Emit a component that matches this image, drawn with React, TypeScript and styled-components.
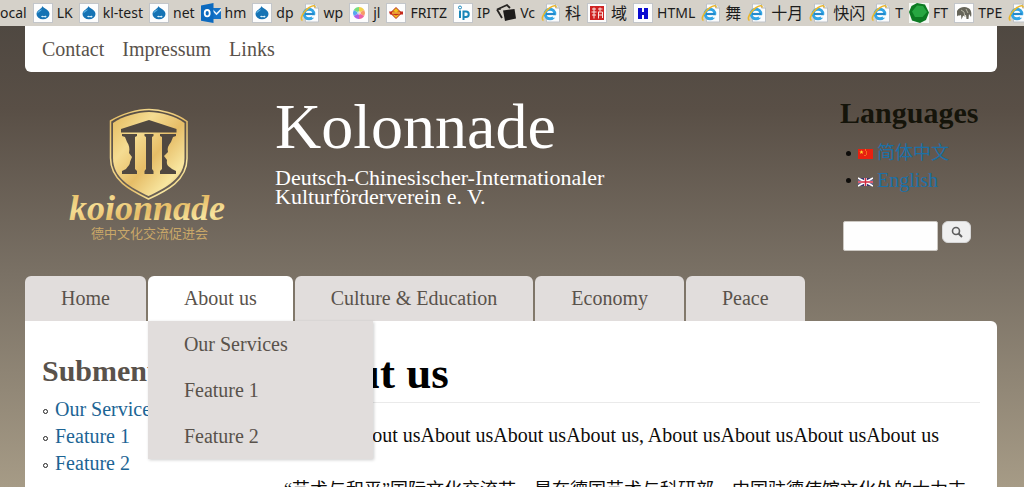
import React from 'react';
import styled, { createGlobalStyle } from 'styled-components';

const serif = `Georgia, 'Liberation Serif', 'Noto Sans CJK SC', serif`;
const sans = `'Noto Sans', 'Noto Sans CJK SC', sans-serif`;

const GlobalStyle = createGlobalStyle`
  * { box-sizing: border-box; }
  html, body { margin: 0; height: 100%; overflow: hidden; }
  body { font-family: ${serif}; font-size: 20px; color: #0e0c0a; background: #a59a86; }
  a { color: inherit; text-decoration: none; }
  ul { list-style: none; margin: 0; padding: 0; }
  h1, h2, p { margin: 0; }
`;

/* ---------- bookmarks bar ---------- */

const BookmarkBar = styled.nav`
  display: flex;
  align-items: center;
  gap: 6px;
  height: 26px;
  overflow: hidden;
  background: #d5d1c9;
  font-family: ${sans};
  line-height: 24px;
  color: #1c1c1c;
`;

const Bookmark = styled.a<{ $cjk?: boolean }>`
  display: flex;
  flex: none;
  align-items: center;
  gap: 4px;
  height: 24px;
  font-size: ${(p) => (p.$cjk ? 16 : 14)}px;
  white-space: nowrap;

  svg { display: block; flex: none; }
`;

type IconKind = 'drupal' | 'outlook' | 'ie' | 'joomla' | 'fritz' | 'ip' | 'cards' | 'seal' | 'h' | 'gem' | 'tree';

const Tile = () => <rect x="0.5" y="0.5" width="19" height="19" fill="#fdfdfd" stroke="#c3c6ca" />;

function BookmarkIcon({ kind }: { kind: IconKind }) {
  return (
    <svg width="20" height="20" viewBox="0 0 20 20" aria-hidden="true">
      {kind === 'drupal' && (
        <>
          <Tile />
          <path d="M9.500 3C10.500 5.500 16.500 6.500 16.500 11a6.500 5.300 0 0 1-13 0C3.500 7 9 6 9.500 3Z" fill="#1673b4" />
          <path d="M4.500 9.500c1-2 3-2.600 4.600-3.200C8.500 8 6.500 8.500 4.500 10.500Z" fill="#5cb3e4" />
          <path d="M8 13.500c1-1 2-.8 2.800-.2 1-.8 2.700-.8 2.700.3 0 1-1.500 1-2.700.3-1 .6-2.300.6-2.800-.4Z" fill="#d9f0fb" />
        </>
      )}
      {kind === 'outlook' && (
        <>
          <path d="M11 5h9.500v11H11Z" fill="#1673c8" />
          <path d="m11.500 7 4 4 5-5" fill="none" stroke="#eaf4fd" strokeWidth="1.600" />
          <path d="M0 2.500 12.500 0v20L0 17.800Z" fill="#0c6abf" />
          <ellipse cx="6.200" cy="10.200" rx="2.500" ry="3.200" fill="none" stroke="#fff" strokeWidth="1.800" />
        </>
      )}
      {kind === 'ie' && (
        <>
          <path d="M5.500 1h9l4 4v14h-13Z" fill="#fbfcfd" stroke="#bfc3c8" />
          <path d="M14.500 1v4h4" fill="#e5e8ec" stroke="#b4b8bd" />
          <circle cx="9" cy="11" r="4.800" fill="#fff" stroke="#32a5e4" strokeWidth="3" />
          <path d="M5 11h9" stroke="#2389cc" strokeWidth="2.200" />
          <path d="M11 12.300h5v2.400h-4Z" fill="#fbfcfd" />
          <path d="M2.500 17.500C-1 16 4 8 8.500 5c4-2.800 7-3 6.500-.5" fill="none" stroke="#eab72e" strokeWidth="1.600" />
        </>
      )}
      {kind === 'joomla' && (
        <>
          <Tile />
          <path d="M10 10V4a6 6 0 0 1 5.200 3Z" fill="#f2d04a" />
          <path d="M10 10 15.200 7a6 6 0 0 1 0 6Z" fill="#f79a66" />
          <path d="m10 10 5.200 3A6 6 0 0 1 10 16Z" fill="#ef62a0" />
          <path d="M10 10v6a6 6 0 0 1-5.200-3Z" fill="#b05fe6" />
          <path d="m10 10-5.200 3a6 6 0 0 1 0-6Z" fill="#56a7f0" />
          <path d="M10 10 4.800 7A6 6 0 0 1 10 4Z" fill="#79dc7d" />
          <circle cx="10" cy="10" r="2" fill="#fff" opacity="0.5" />
        </>
      )}
      {kind === 'fritz' && (
        <>
          <Tile />
          <path d="m10 4.500 5.500 5.500-5.500 5.500L4.500 10Z" fill="#f3c318" stroke="#b3221b" />
          <path d="M3 8.500h5l2 1 2-1h5v3h-4l-3 1-3-1H4Z" fill="#c62a1c" />
          <path d="M6 10h8" stroke="#ffe04a" strokeWidth="1.200" />
        </>
      )}
      {kind === 'ip' && (
        <>
          <Tile />
          <circle cx="7" cy="4.500" r="1.500" fill="none" stroke="#1a86b8" />
          <path d="M7 7.500v7.500M10.500 17V8.500h2.500a2.500 2.500 0 0 1 0 5.500h-2" fill="none" stroke="#1a86b8" strokeWidth="2" />
        </>
      )}
      {kind === 'cards' && (
        <>
          <path d="M1 6.500 11 2l3 3M1 6.500l5 8.500" fill="none" stroke="#262422" strokeWidth="1.800" />
          <path d="m7 7.500 11.500-1.500 1.500 9.500-11 2.500Z" fill="#1d1b1a" />
          <path d="m1 6.500 3-1.500 1 2Z" fill="#262422" />
        </>
      )}
      {kind === 'seal' && (
        <>
          <Tile />
          <rect x="3" y="3" width="14" height="14" fill="#cf2222" />
          <path d="M5 6h4M7 4.500v11M4.500 9h5M5 12h4M11 6h4.500M13 4.500v4M11 9h4.500v6M11.500 9v6.500M11 12h4" stroke="#fbe3e0" fill="none" />
        </>
      )}
      {kind === 'h' && (
        <>
          <Tile />
          <path d="M5 5h4v4h2V5h4v11h-4v-4H9v4H5Z" fill="#0a0ad0" />
        </>
      )}
      {kind === 'gem' && (
        <>
          <rect width="20" height="20" fill="#f5f8f4" />
          <path d="m8 0 8 1.500 4 8-3 7.500-6 3-8-2.500L0 9l2.500-6Z" fill="#0c7a22" />
          <path d="m8 2.500 6 .5 4 6-4.500 5H6L3 8.500Z" fill="#27a641" />
        </>
      )}
      {kind === 'tree' && (
        <>
          <Tile />
          <path d="M3 8c2-4 8-5 11-3 3 1 4 5 3 9l-2-3-.5 5h-2L12 12l-3 1-1.500 3.500L7 12c-2 1-3.500 0-4 1.500Z" fill="#66655a" />
          <path d="m7 7 3 2 1 5M12 6l2 4" stroke="#b7b6a5" fill="none" />
        </>
      )}
    </svg>
  );
}

const bookmarks: { icon: IconKind; label: string; cjk?: boolean }[] = [
  { icon: 'drupal', label: 'LK' },
  { icon: 'drupal', label: 'kl-test' },
  { icon: 'drupal', label: 'net' },
  { icon: 'outlook', label: 'hm' },
  { icon: 'drupal', label: 'dp' },
  { icon: 'ie', label: 'wp' },
  { icon: 'joomla', label: 'jl' },
  { icon: 'fritz', label: 'FRITZ' },
  { icon: 'ip', label: 'IP' },
  { icon: 'cards', label: 'Vc' },
  { icon: 'ie', label: '科', cjk: true },
  { icon: 'seal', label: '域', cjk: true },
  { icon: 'h', label: 'HTML' },
  { icon: 'ie', label: '舞', cjk: true },
  { icon: 'ie', label: '十月', cjk: true },
  { icon: 'ie', label: '快闪', cjk: true },
  { icon: 'ie', label: 'T' },
  { icon: 'gem', label: 'FT' },
  { icon: 'tree', label: 'TPE' },
  { icon: 'ie', label: '' },
];

/* ---------- page ---------- */

const Page = styled.div`
  display: flex;
  flex-direction: column;
  height: calc(100vh - 26px);
  padding: 0 27px 0 25px;
  background: linear-gradient(#4f4841, #594f46 18%, #7a7165 54%, #a69b86);
`;

const TopMenu = styled.nav`
  display: flex;
  align-items: center;
  gap: 18px;
  flex: none;
  height: 46px;
  padding: 0 17px;
  background: #fff;
  border-radius: 0 0 6px 6px;
  color: #59524b;
`;

const Header = styled.header`
  display: grid;
  grid-template-columns: 250px 1fr 157px;
  flex: none;
  min-height: 204px;
`;

const LogoLink = styled.a`
  padding: 34px 0 0 37px;

  svg { display: block; }
`;

const Branding = styled.div`
  padding-top: 23px;
  color: #fff;
`;

const SiteName = styled.div`
  font-size: 64px;
  line-height: 64px;
`;

const Slogan = styled.p`
  max-width: 350px;
  margin-top: 9px;
  font-size: 22px;
  line-height: 19px;
`;

const HeaderSide = styled.div`
  padding-top: 24px;
`;

const BlockTitle = styled.h2<{ $color: string }>`
  font-size: 30px;
  line-height: 34px;
  color: ${(p) => p.$color};
`;

const LanguageList = styled.ul`
  margin-top: 10px;
  padding-left: 6px;
`;

const LanguageItem = styled.li`
  display: flex;
  align-items: center;
  height: 27px;

  &::before {
    content: '';
    width: 5px;
    height: 5px;
    margin-right: 7px;
    border-radius: 50%;
    background: #0e0c0a;
  }
`;

const LanguageLink = styled.a<{ $cjk?: boolean }>`
  display: flex;
  align-items: center;
  gap: 4px;
  font-size: ${(p) => (p.$cjk ? 18 : 20)}px;
  line-height: 27px;
  color: #1c70a6;
`;

const SearchForm = styled.form`
  display: flex;
  align-items: flex-start;
  gap: 4px;
  margin-top: 27px;
  padding-left: 3px;
`;

const SearchInput = styled.input`
  width: 95px;
  height: 30px;
  padding: 4px;
  border: 1px solid #ccc8c2;
  border-radius: 2px;
  background: #fefefe;
  font: 16px ${serif};
`;

const SearchButton = styled.button`
  display: flex;
  align-items: center;
  justify-content: center;
  width: 29px;
  height: 22px;
  padding: 0;
  border: 1px solid #d5d5d5;
  border-radius: 6px;
  background: #efefef;
`;

const Tabs = styled.ul`
  display: flex;
  flex: none;
  gap: 2px;
`;

const Tab = styled.li`
  position: relative;
`;

const TabLink = styled.a<{ $active?: boolean }>`
  display: block;
  padding: 0 36px;
  border-radius: 6px 6px 0 0;
  line-height: 45px;
  white-space: nowrap;
  color: #59524b;
  background: ${(p) => (p.$active ? '#fff' : '#e1dddc')};
`;

const Dropdown = styled.ul`
  position: absolute;
  top: 100%;
  left: 0;
  z-index: 2;
  width: 225px;
  background: #e1dddc;
  box-shadow: 1px 1px 3px rgba(0, 0, 0, 0.2);
`;

const DropdownLink = styled.a`
  display: block;
  padding: 0 36px;
  line-height: 46px;
  color: #59524b;
`;

const Content = styled.main`
  display: grid;
  grid-template-columns: 233px 1fr;
  flex: 1;
  min-height: 0;
  padding: 0 17px;
  overflow: hidden;
  background: #fff;
  border-top-right-radius: 6px;
`;

const Sidebar = styled.aside`
  padding-top: 33px;
`;

const SubmenuList = styled.ul`
  margin-top: 8px;
`;

const SubmenuItem = styled.li`
  display: flex;
  align-items: center;
  line-height: 27px;
  color: #1c6494;

  &::before {
    content: '';
    width: 5px;
    height: 5px;
    margin: 4px 7px 0 1px;
    box-sizing: border-box;
    border: 1px solid #222;
    border-radius: 50%;
  }
`;

const PageTitle = styled.h1`
  margin-top: 27px;
  padding-bottom: 4px;
  border-bottom: 1px solid #eaeaea;
  font-size: 45px;
  line-height: 50px;
  color: #000;
`;

const Intro = styled.p`
  margin-top: 18px;
  line-height: 28px;
  white-space: nowrap;
`;

const ChineseText = styled.p`
  margin-top: 27px;
  padding-left: 9px;
  font-size: 18px;
  line-height: 28px;
  white-space: nowrap;
`;

function Logo() {
  return (
    <svg width="180" height="140" viewBox="62 106 180 140" role="img" aria-label="Kolonnade">
      <defs>
        <linearGradient id="gold" x1="0" y1="0" x2="1" y2="1">
          <stop offset="0" stopColor="#e3b95d" />
          <stop offset="0.3" stopColor="#f5dc92" />
          <stop offset="0.55" stopColor="#e6bd67" />
          <stop offset="0.8" stopColor="#f8e6a0" />
          <stop offset="1" stopColor="#dfb558" />
        </linearGradient>
      </defs>
      <path
        d="M149 109.500c11 0 27 4 38 12v37c0 22-20 32-38.500 40.500C130 190 110.500 180 110.500 158v-37c11-7 27-11.500 38.500-11.500Z"
        fill="none"
        stroke="url(#gold)"
        strokeWidth="1.500"
      />
      <path
        d="M149 112c11 0 25 3.500 35.500 11v35c0 20-18 29.500-36 38C130.500 187.500 113 178 113 158v-35c10-7 25-11 36-11Z"
        fill="url(#gold)"
      />
      <g fill="#504840">
        <path d="m121 129 28-9 27.500 9v3.500H121Z" />
        <path d="M122 134h15v2l-2 1v32l2 2v3h-15v-3l4-2c2-3 4-4 4-7l2-5-3-4c1-5 0-8-2-11l-2-5-3-1Z" />
        <path d="M144.500 134h9v2l-1.500 1v32l1.500 2v3h-9v-3l1.500-2v-32l-1.500-1Z" />
        <path d="M160 134h16v2l-3 1-2 5c-3 4-4 6-3 10l-4 4 3 4c-1 6 2 6 5 9l4 2v3h-16v-3l2-2v-32l-2-1Z" />
      </g>
      <text x="69" y="220" fill="url(#gold)" fontFamily="Liberation Serif, serif" fontSize="36" fontStyle="italic" fontWeight="700">
        koionnade
      </text>
      <text x="91" y="238" fill="#c9a768" fontFamily="Noto Sans CJK SC, sans-serif" fontSize="13">
        德中文化交流促进会
      </text>
    </svg>
  );
}

const ChinaFlag = () => (
  <svg width="15" height="12" viewBox="0 0 15 12" aria-hidden="true">
    <rect y="1" width="15" height="10" fill="#e82010" />
    <path d="m3.500 2 .6 1.500h1.500L4.400 4.500l.5 1.500-1.400-1-1.400 1 .5-1.500-1.200-1h1.500Z" fill="#ffd52c" />
    <path d="M7 2h1M8 4h1M8 6h1M6.500 7.500h1" stroke="#ffb52c" />
  </svg>
);

const BritainFlag = () => (
  <svg width="15" height="12" viewBox="0 0 15 12" aria-hidden="true">
    <rect y="3" width="15" height="8" fill="#38366d" />
    <path d="m0 3 15 8M15 3 0 11" stroke="#fff" strokeWidth="1.600" />
    <path d="M7.500 3v8M0 7h15" stroke="#fff" strokeWidth="2.600" />
    <path d="M7.500 3v8M0 7h15" stroke="#d2293f" strokeWidth="1.400" />
  </svg>
);

const submenu = ['Our Services', 'Feature 1', 'Feature 2'];

export default function App() {
  return (
    <>
      <GlobalStyle />
      <BookmarkBar aria-label="Bookmarks">
        <Bookmark href="#">ocal</Bookmark>
        {bookmarks.map((b, i) => (
          <Bookmark href="#" key={i} $cjk={b.cjk} aria-label={b.label || 'Bookmark'}>
            <BookmarkIcon kind={b.icon} />
            {b.label}
          </Bookmark>
        ))}
      </BookmarkBar>
      <Page>
        <TopMenu>
          <a href="#">Contact</a>
          <a href="#">Impressum</a>
          <a href="#">Links</a>
        </TopMenu>
        <Header>
          <LogoLink href="#">
            <Logo />
          </LogoLink>
          <Branding>
            <SiteName>Kolonnade</SiteName>
            <Slogan>Deutsch-Chinesischer-Internationaler Kulturförderverein e. V.</Slogan>
          </Branding>
          <HeaderSide>
            <BlockTitle $color="#15140a">Languages</BlockTitle>
            <LanguageList>
              <LanguageItem>
                <LanguageLink href="#" $cjk>
                  <ChinaFlag />
                  简体中文
                </LanguageLink>
              </LanguageItem>
              <LanguageItem>
                <LanguageLink href="#">
                  <BritainFlag />
                  English
                </LanguageLink>
              </LanguageItem>
            </LanguageList>
            <SearchForm onSubmit={(e) => e.preventDefault()}>
              <SearchInput type="text" aria-label="Search" />
              <SearchButton type="submit" aria-label="Search">
                <svg width="12" height="12" viewBox="0 0 12 12" fill="none" stroke="#5e5e5e" aria-hidden="true">
                  <circle cx="5" cy="5" r="3.500" strokeWidth="1.600" />
                  <path d="m7.500 7.500 3.500 3.500" strokeWidth="2" />
                </svg>
              </SearchButton>
            </SearchForm>
          </HeaderSide>
        </Header>
        <Tabs>
          <Tab>
            <TabLink href="#">Home</TabLink>
          </Tab>
          <Tab>
            <TabLink href="#" $active>
              About us
            </TabLink>
            <Dropdown>
              {submenu.map((s) => (
                <li key={s}>
                  <DropdownLink href="#">{s}</DropdownLink>
                </li>
              ))}
            </Dropdown>
          </Tab>
          <Tab>
            <TabLink href="#">Culture &amp; Education</TabLink>
          </Tab>
          <Tab>
            <TabLink href="#">Economy</TabLink>
          </Tab>
          <Tab>
            <TabLink href="#">Peace</TabLink>
          </Tab>
        </Tabs>
        <Content>
          <Sidebar>
            <BlockTitle $color="#59524b">Submenu</BlockTitle>
            <SubmenuList>
              {submenu.map((s) => (
                <SubmenuItem key={s}>
                  <a href="#">{s}</a>
                </SubmenuItem>
              ))}
            </SubmenuList>
          </Sidebar>
          <article>
            <PageTitle>About us</PageTitle>
            <Intro>
              About usAbout usAbout usAbout usAbout us, About usAbout usAbout usAbout us
            </Intro>
            <ChineseText>
              “艺术与和平”国际文化交流节，是在德国艺术与科研部、中国驻德使馆文化处的大力支
            </ChineseText>
          </article>
        </Content>
      </Page>
    </>
  );
}
